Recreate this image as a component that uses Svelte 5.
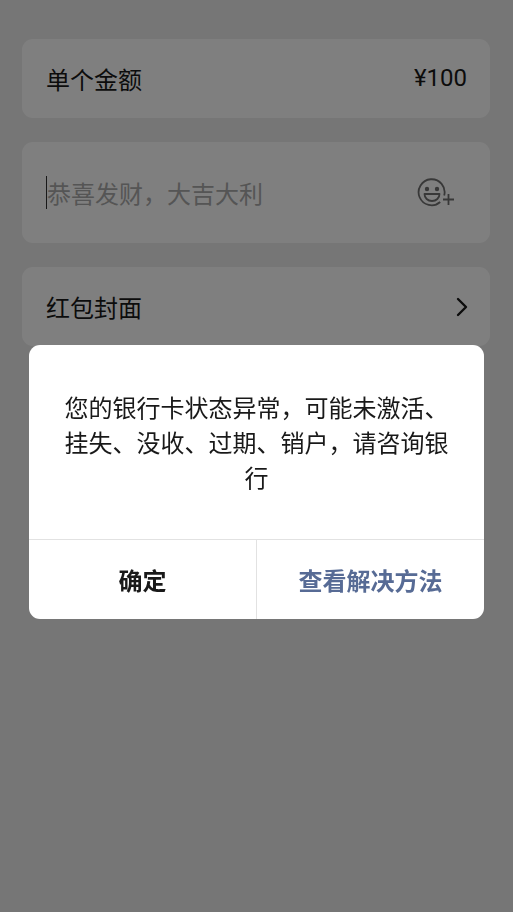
<script lang="ts">
	let amount = 100;
	let greeting = $state("");
	let dialogOpen = $state(true);

	const message = "您的银行卡状态异常，可能未激活、挂失、没收、过期、销户，请咨询银行";

	function closeDialog() {
		dialogOpen = false;
	}
</script>

<main class="page">
	<div class="card">
		<span>单个金额</span>
		<span class="amount">¥{amount}</span>
	</div>

	<div class="card greeting">
		<span class="caret"></span>
		<input
			class="greeting-input"
			type="text"
			aria-label="祝福语"
			placeholder="恭喜发财，大吉大利"
			bind:value={greeting}
		/>
		<button class="emoji" type="button" aria-label="添加表情">
			<svg width="38" height="30" viewBox="0 0 38 30" fill="none" stroke="currentColor" stroke-width="1.8">
				<path d="M23.2 24A13 13 0 1 1 27.2 17.5" />
				<circle cx="10" cy="11" r="2.2" fill="currentColor" stroke="none" />
				<circle cx="20" cy="11" r="2.2" fill="currentColor" stroke="none" />
				<path d="M7.5 16h15c0 4-3.2 7-7.5 7s-7.5-3-7.5-7z" stroke-linejoin="round" />
				<path d="M26 21.5h11M31.5 16v11" />
			</svg>
		</button>
	</div>

	<button class="card cover" type="button">
		<span>红包封面</span>
		<svg width="12" height="20" viewBox="0 0 12 20" fill="none" stroke="currentColor" stroke-width="2.4">
			<path d="M3 2l8 8-8 8" stroke-linecap="round" stroke-linejoin="round" />
		</svg>
	</button>
</main>

{#if dialogOpen}
	<div class="overlay">
		<div class="dialog" role="alertdialog" aria-modal="true" aria-describedby="dialog-message">
			<p class="message" id="dialog-message">{message}</p>
			<div class="actions">
				<button class="action" type="button" onclick={closeDialog}>确定</button>
				<button class="action link" type="button">查看解决方法</button>
			</div>
		</div>
	</div>
{/if}

<style>
:global(body) {
	margin: 0;
	background: #ededed;
}

.page,
.overlay {
	font-family: "Noto Sans CJK SC", sans-serif;
	font-size: 24px;
	line-height: 35px;
	color: #191919;
}

button,
input {
	margin: 0;
	padding: 0;
	border: 0;
	background: none;
	font: inherit;
	color: inherit;
}

.page {
	display: flex;
	flex-direction: column;
	gap: 24px;
	padding: 39px 23px 24px 22px;
}

.card {
	display: flex;
	align-items: center;
	justify-content: space-between;
	box-sizing: border-box;
	min-height: 79px;
	padding: 22px 23px 22px 24px;
	border-radius: 11px;
	background: #fff;
}

.amount {
	font-family: Roboto, sans-serif;
}

.greeting {
	min-height: 101px;
	padding-right: 35px;
}

.caret {
	width: 1px;
	height: 33px;
	background: #333;
}

.greeting-input {
	flex: 1;
	min-width: 0;
	outline: none;
}

.greeting-input::placeholder {
	color: #aaa;
	opacity: 1;
}

.emoji {
	display: flex;
	color: #707070;
}

.cover svg {
	display: block;
	overflow: visible;
}

.overlay {
	position: fixed;
	inset: 0;
	display: flex;
	align-items: center;
	justify-content: center;
	box-sizing: border-box;
	padding: 51px 29px 0;
	background: rgba(0, 0, 0, 0.5);
}

.dialog {
	width: 100%;
	max-width: 480px;
	overflow: hidden;
	border-radius: 11px;
	background: #fff;
}

.message {
	margin: 0;
	padding: 44px 34px 45px;
	text-align: center;
}

.actions {
	display: flex;
	border-top: 1px solid #e2e2e2;
}

.action {
	flex: 1;
	padding: 22px 0;
	font-weight: 700;
}

.action + .action {
	border-left: 1px solid #e2e2e2;
}

.link {
	color: #576b95;
}
</style>
